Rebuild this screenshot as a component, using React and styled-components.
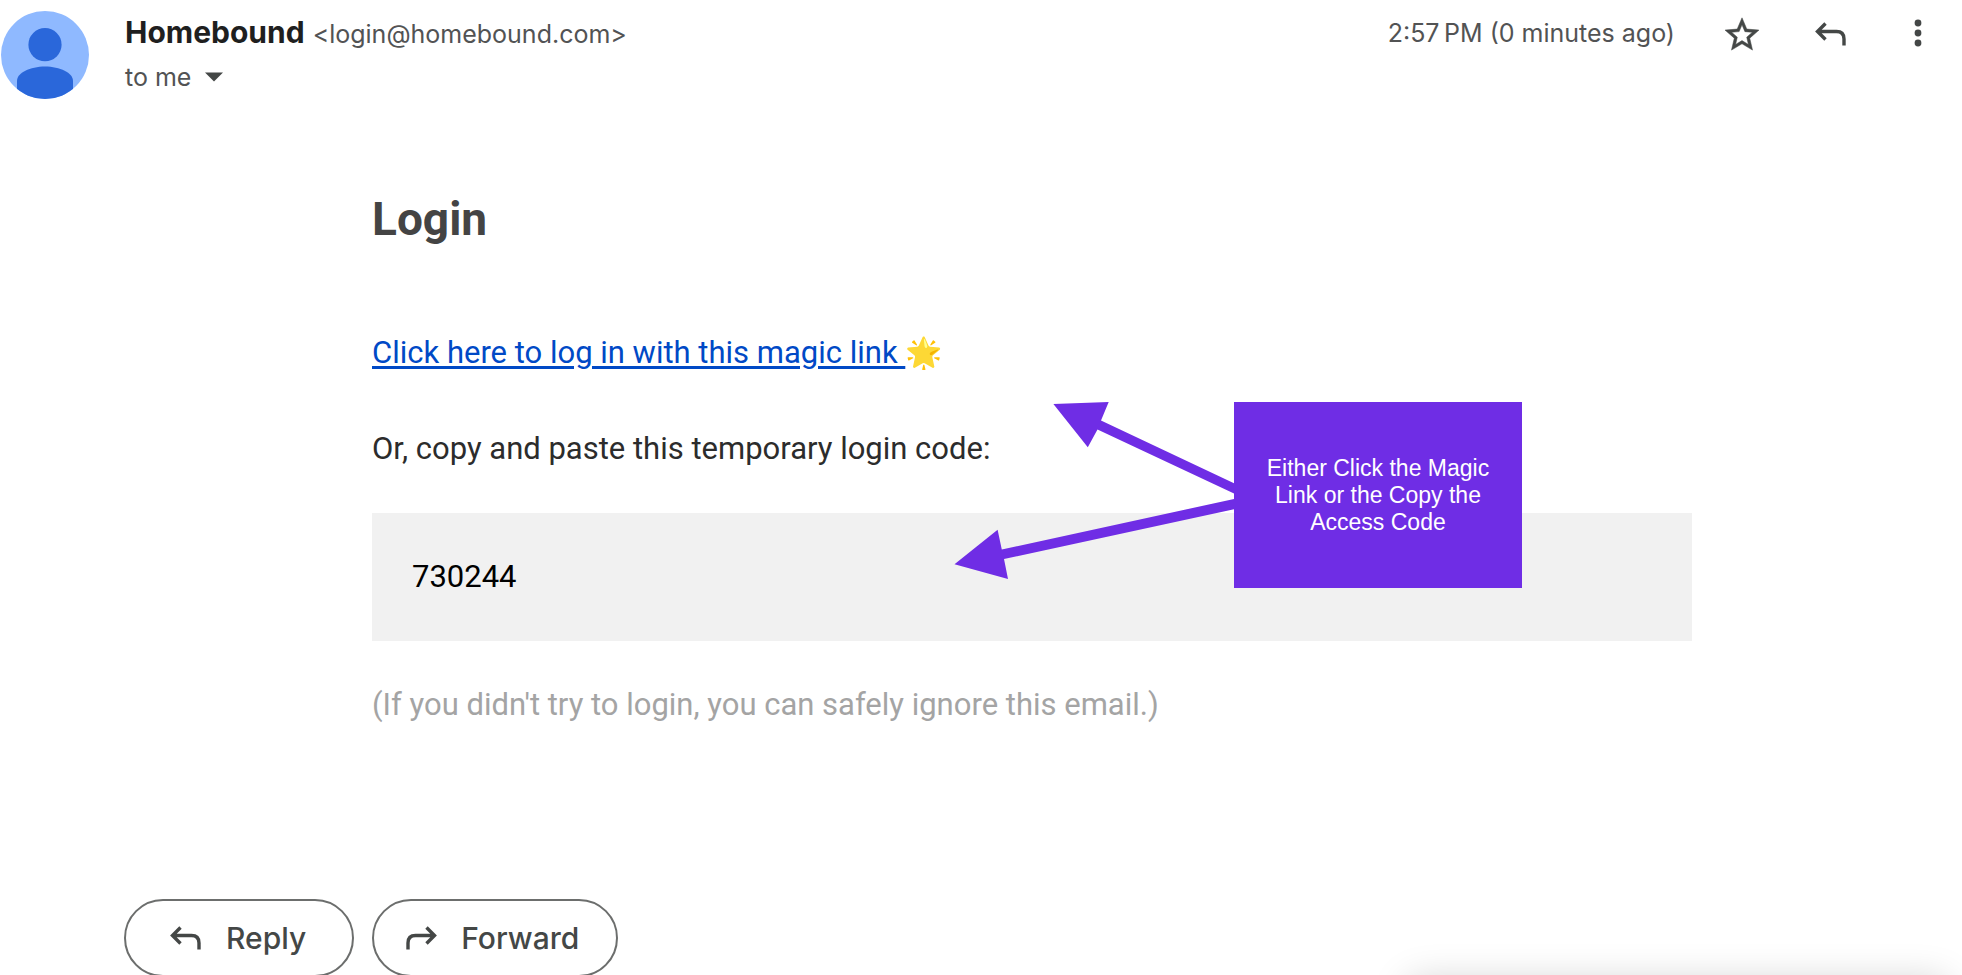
import React from 'react';
import styled, { createGlobalStyle } from 'styled-components';

const GlobalStyle = createGlobalStyle`
  * {
    box-sizing: border-box;
  }

  html,
  body,
  #root {
    height: 100%;
  }

  body {
    margin: 0;
    background: #fff;
    font-family: Roboto, sans-serif;
  }
`;

const Page = styled.div`
  position: relative;
  height: 100%;
  overflow: hidden;
`;

const Header = styled.header`
  display: flex;
  align-items: flex-start;
  padding: 11px 20px 0 1px;
  font-family: Inter, sans-serif;
  color: #525354;
`;

const Avatar = styled.svg`
  flex: none;
  width: 88px;
  height: 88px;
`;

const Sender = styled.div`
  flex: 1;
  margin-left: 36px;
`;

const SenderLine = styled.div`
  display: flex;
  align-items: baseline;
  gap: 8px;
  height: 44px;
  line-height: 42px;
`;

const Name = styled.h3`
  margin: 0;
  font-size: 30px;
  font-weight: 700;
  color: #1f1f1f;
`;

const Address = styled.span`
  font-size: 25px;
`;

const Recipient = styled.button`
  display: flex;
  align-items: center;
  gap: 14px;
  height: 44px;
  padding: 0;
  border: 0;
  background: none;
  font: 25px Inter, sans-serif;
  color: inherit;

  svg {
    width: 18px;
    height: 10px;
  }
`;

const Actions = styled.div`
  display: flex;
  align-items: center;
  gap: 40px;
  height: 44px;
`;

const Time = styled.time`
  margin-right: 3px;
  font-size: 25px;
`;

const IconButton = styled.button`
  display: flex;
  padding: 0;
  border: 0;
  background: none;
  color: #444746;

  svg {
    width: 48px;
    height: 48px;
  }
`;

const Message = styled.main`
  position: relative;
  margin: 90px 270px 170px 372px;
`;

const Title = styled.h1`
  margin: 0 0 80px;
  font-size: 46px;
  line-height: 60px;
  font-weight: 700;
  color: #444;
`;

const Text = styled.p`
  margin: 0 0 ${({ $gap }) => $gap || 0}px;
  font-size: 31px;
  line-height: 48px;
  color: ${({ $muted }) => ($muted ? '#a4a4a4' : '#2c2c2c')};
`;

const MagicLink = styled.a`
  color: #0049c6;
  text-decoration-thickness: 3px;
  text-underline-offset: 3px;
`;

const Emoji = styled.span`
  display: inline-block;
  vertical-align: bottom;
  font-size: 30px;
  line-height: 48px;
`;

const Code = styled.div`
  margin: 0 0 40px;
  padding: 40px;
  background: #f1f1f1;
  font-size: 31px;
  line-height: 48px;
  color: #000;
`;

// Sits on top of the message, hence absolute
const Callout = styled.aside`
  position: absolute;
  top: 213px;
  right: 170px;
  display: flex;
`;

const Arrows = styled.svg`
  width: 280px;
  height: 186px;
  fill: #6f2de5;
`;

const CalloutBox = styled.div`
  display: flex;
  align-items: center;
  width: 288px;
  padding: 0 24px;
  background: #6f2de5;
  font: 23px/27px 'Liberation Sans', Arial, sans-serif;
  text-align: center;
  color: #fff;
`;

const Footer = styled.footer`
  display: flex;
  gap: 18px;
  padding: 0 124px;
`;

const PillButton = styled.button`
  display: flex;
  align-items: center;
  gap: 24px;
  height: 78px;
  padding: 0 ${({ $end }) => $end}px 0 ${({ $start }) => $start}px;
  border: 2px solid #6c6e6d;
  border-radius: 40px;
  background: none;
  font: 500 30px Inter, sans-serif;
  color: #444746;

  svg {
    width: 32px;
    height: 24px;
  }
`;

const ComposePanel = styled.div`
  position: absolute;
  right: 12px;
  bottom: -44px;
  width: 544px;
  height: 40px;
  border-radius: 16px;
  background: #fff;
  box-shadow: 0 0 36px rgba(0, 0, 0, 0.17);
`;

const ArrowPath = () => (
  <path
    d="M10.5 1.5 2.5 9.5l8 8M3 9.5h18.5q7.5 0 7.5 7.5v6.5"
    fill="none"
    stroke="currentColor"
    strokeWidth="3.4"
  />
);

function App() {
  return (
    <Page>
      <GlobalStyle />
      <Header>
        <Avatar viewBox="0 0 88 88" aria-hidden="true">
          <clipPath id="avatar">
            <circle cx="44" cy="44" r="44" />
          </clipPath>
          <g clipPath="url(#avatar)">
            <path fill="#8fb9ff" d="M0 0h88v88H0z" />
            <g fill="#2a67da">
              <circle cx="44" cy="33.7" r="16.6" />
              <path d="M16 88V70c0-8 13-14.4 28-14.4S72 62 72 70v18z" />
            </g>
          </g>
        </Avatar>
        <Sender>
          <SenderLine>
            <Name>Homebound</Name>
            <Address>&lt;login@homebound.com&gt;</Address>
          </SenderLine>
          <Recipient>
            to me
            <svg viewBox="0 0 18 10" aria-hidden="true">
              <path d="M0 .5h18l-9 9z" fill="#444746" />
            </svg>
          </Recipient>
        </Sender>
        <Actions>
          <Time>2:57{'\u202f'}PM (0 minutes ago)</Time>
          <IconButton aria-label="Star">
            <svg viewBox="0 0 48 48">
              <path
                transform="translate(3.6 5.4) scale(1.7)"
                fill="currentColor"
                stroke="currentColor"
                strokeWidth="0.3"
                d="m22 9.24-7.19-.62L12 2 9.19 8.63 2 9.24l5.46 4.73L5.82 21 12 17.27 18.18 21l-1.63-7.03zM12 15.4l-3.76 2.27 1-4.28-3.32-2.88 4.38-.38L12 6.1l1.71 4.04 4.38.38-3.32 2.88 1 4.28z"
              />
            </svg>
          </IconButton>
          <IconButton aria-label="Reply">
            <svg viewBox="0 0 48 48">
              <g transform="translate(9 13)">
                <ArrowPath />
              </g>
            </svg>
          </IconButton>
          <IconButton aria-label="More">
            <svg viewBox="0 0 48 48" fill="currentColor">
              <circle cx="24" cy="14" r="3.4" />
              <circle cx="24" cy="24" r="3.4" />
              <circle cx="24" cy="34" r="3.4" />
            </svg>
          </IconButton>
        </Actions>
      </Header>

      <Message>
        <Title>Login</Title>
        <Text $gap={48}>
          <MagicLink href="#login">
            Click here to log in with this magic link <Emoji>🌟</Emoji>
          </MagicLink>
        </Text>
        <Text $gap={40}>Or, copy and paste this temporary login code:</Text>
        <Code>730244</Code>
        <Text $muted>(If you didn&apos;t try to login, you can safely ignore this email.)</Text>

        <Callout>
          <Arrows viewBox="0 0 280 186" aria-hidden="true">
            <path d="M99.4 2 154.7 0 147 18.5l133 62.8V91.5L143.5 27.5 133.8 45.3z" />
            <path d="M.5 162.3 43.6 127.7l4.2 19.8L280 97v10.3L50 157l4 20z" />
          </Arrows>
          <CalloutBox>Either Click the Magic Link or the Copy the Access Code</CalloutBox>
        </Callout>
      </Message>

      <Footer>
        <PillButton $start={44} $end={46}>
          <svg viewBox="0 0 32 24" aria-hidden="true">
            <ArrowPath />
          </svg>
          Reply
        </PillButton>
        <PillButton $start={31} $end={37}>
          <svg viewBox="0 0 32 24" aria-hidden="true">
            <g transform="matrix(-1 0 0 1 32 0)">
              <ArrowPath />
            </g>
          </svg>
          Forward
        </PillButton>
      </Footer>
      <ComposePanel />
    </Page>
  );
}

export default App;
